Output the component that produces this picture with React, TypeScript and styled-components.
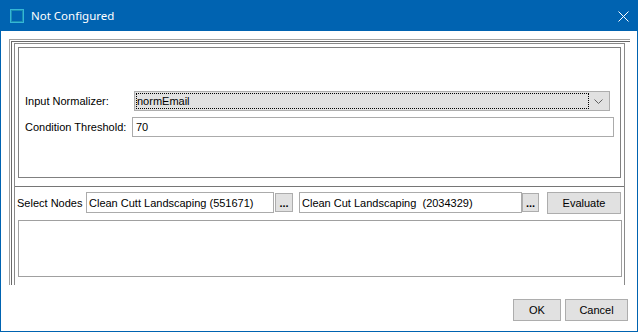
import * as React from 'react';
import styled, { createGlobalStyle } from 'styled-components';

const GlobalStyle = createGlobalStyle`
  html, body {
    margin: 0;
    padding: 0;
    background: #ffffff;
  }
  * {
    box-sizing: border-box;
  }
`;

const Window = styled.div`
  width: 638px;
  height: 332px;
  border: 1px solid #0063b1;
  background: #ffffff;
  display: flex;
  flex-direction: column;
  font-family: 'Liberation Sans', Arial, sans-serif;
  font-size: 11px;
  color: #000;
`;

const TitleBar = styled.div`
  height: 30px;
  flex: none;
  background: #0063b1;
  display: flex;
  align-items: center;
  padding: 0 8px 0 9px;
`;

const AppIcon = styled.div`
  width: 14px;
  height: 14px;
  margin-right: 7px;
  border: 1px solid #35b7d6;
  box-shadow: inset 0 0 0 1px #1b8fb3;
`;

const Title = styled.div`
  flex: 1;
  color: #ffffff;
  font-family: 'Segoe UI', 'Noto Sans', sans-serif;
  font-size: 11.5px;
  line-height: 16px;
`;

const CloseIcon = styled.svg`
  display: block;
`;

const Body = styled.div`
  padding: 8px 7px 0 8px;
  flex: none;
`;

const Bevel = styled.div`
  height: 246px;
  border-top: 1px solid #a0a0a0;
  border-left: 1px solid #a0a0a0;
  padding: 1px 0 0 1px;
  display: flex;
`;

const BevelInner = styled.div`
  flex: 1;
  border-top: 1px solid #696969;
  border-left: 1px solid #696969;
  padding: 1px 5px 0 2px;
  display: flex;
`;

const SplitPane = styled.div`
  flex: 1;
  border: 1px solid #8a8a8a;
  border-bottom: none;
  padding: 3px 3px 0 3px;
  display: flex;
  flex-direction: column;
`;

const TopPanel = styled.div`
  height: 131px;
  flex: none;
  border: 1px solid #808080;
  padding: 43px 6px 0 6px;
  display: flex;
  flex-direction: column;
  gap: 6px;
`;

const FormRow = styled.div`
  display: flex;
  align-items: center;
  height: 20px;
`;

const Label = styled.div<{ $width: number }>`
  width: ${p => p.$width}px;
  flex: none;
  white-space: nowrap;
`;

const Combo = styled.div`
  flex: 1;
  height: 20px;
  margin: 0 4px 0 2px;
  background: #e1e1e1;
  border: 1px solid #adadad;
  padding: 1px;
  display: flex;
  align-items: stretch;
`;

const ComboValue = styled.div`
  flex: 1;
  border: 1px dotted #000;
  display: flex;
  align-items: center;
`;

const ComboArrow = styled.div`
  width: 19px;
  flex: none;
  display: flex;
  align-items: center;
  justify-content: center;
`;

const TextField = styled.div<{ $width?: number; $pad?: number; $height?: number }>`
  ${p => (p.$width ? `width: ${p.$width}px; flex: none;` : 'flex: 1;')}
  height: ${p => p.$height ?? 20}px;
  border: 1px solid #ababab;
  background: #fff;
  padding-left: ${p => p.$pad ?? 3}px;
  display: flex;
  align-items: center;
  white-space: nowrap;
  overflow: hidden;
`;

const Divider = styled.div`
  height: 1px;
  flex: none;
  margin: 8px -3px 0 -3px;
  background: #767676;
`;

const BottomPanel = styled.div`
  margin: 0 -3px;
  padding-top: 5px;
  display: flex;
  flex-direction: column;
`;

const NodesRow = styled.div`
  display: flex;
  align-items: flex-start;
  height: 22px;
  padding-left: 2px;
`;

const NodesLabel = styled.div`
  width: 69px;
  height: 21px;
  flex: none;
  display: flex;
  align-items: center;
`;

const Spacer = styled.div<{ $width: number }>`
  width: ${p => p.$width}px;
  flex: none;
`;

const BrowseButton = styled.div<{ $width: number; $gap: number }>`
  width: ${p => p.$width}px;
  height: 19px;
  margin: 1px 0 0 ${p => p.$gap}px;
  flex: none;
  background: #e1e1e1;
  border: 1px solid #adadad;
  display: flex;
  align-items: center;
  justify-content: center;
  font-weight: bold;
`;

const Button = styled.div<{ $width: number }>`
  width: ${p => p.$width}px;
  height: 22px;
  flex: none;
  background: #e1e1e1;
  border: 1px solid #adadad;
  display: flex;
  align-items: center;
  justify-content: center;
`;

const ResultArea = styled.div`
  width: 604px;
  height: 57px;
  margin: 6px 0 0 3px;
  border: 1px solid #a0a0a0;
  background: #fff;
`;

const Footer = styled.div`
  flex: none;
  margin-top: 14px;
  padding: 0 9px 0 0;
  display: flex;
  justify-content: flex-end;
  gap: 4px;
`;

export default function App() {
  return (
    <>
      <GlobalStyle />
      <Window>
        <TitleBar>
          <AppIcon />
          <Title>Not Configured</Title>
          <CloseIcon width="11" height="11" viewBox="0 0 11 11">
            <path d="M0.5 0.5 L10.5 10.5 M10.5 0.5 L0.5 10.5" stroke="#ffffff" strokeWidth="1" fill="none" />
          </CloseIcon>
        </TitleBar>
        <Body>
          <Bevel>
            <BevelInner>
              <SplitPane>
                <TopPanel>
                  <FormRow>
                    <Label $width={107}>Input Normalizer:</Label>
                    <Combo>
                      <ComboValue>normEmail</ComboValue>
                      <ComboArrow>
                        <svg width="9" height="5" viewBox="0 0 9 5">
                          <polyline points="0.5,0.5 4.5,4.5 8.5,0.5" stroke="#606060" strokeWidth="1" fill="none" />
                        </svg>
                      </ComboArrow>
                    </Combo>
                  </FormRow>
                  <FormRow>
                    <Label $width={107}>Condition Threshold:</Label>
                    <TextField>70</TextField>
                  </FormRow>
                </TopPanel>
                <Divider />
                <BottomPanel>
                  <NodesRow>
                    <NodesLabel>Select Nodes</NodesLabel>
                    <TextField $width={188} $pad={2} $height={21}>
                      Clean Cutt Landscaping (551671)
                    </TextField>
                    <BrowseButton $width={18} $gap={1}>...</BrowseButton>
                    <Spacer $width={6} />
                    <TextField $width={223} $pad={2} $height={21}>
                      Clean Cut Landscaping&nbsp; (2034329)
                    </TextField>
                    <BrowseButton $width={17} $gap={0}>...</BrowseButton>
                    <Spacer $width={8} />
                    <Button $width={74}>Evaluate</Button>
                  </NodesRow>
                  <ResultArea />
                </BottomPanel>
              </SplitPane>
            </BevelInner>
          </Bevel>
        </Body>
        <Footer>
          <Button $width={48}>OK</Button>
          <Button $width={63}>Cancel</Button>
        </Footer>
      </Window>
    </>
  );
}
